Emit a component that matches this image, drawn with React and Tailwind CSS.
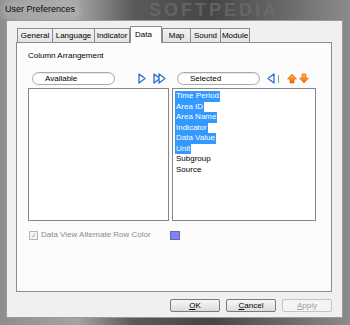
import React from "react";

const font = { fontFamily: "'Liberation Sans', Arial, sans-serif" };

const tabs = ["General", "Language", "Indicator", "Data", "Map", "Sound", "Module"];
const tabWidths = ["w-[36px]", "w-[43px]", "w-[36px]", "w-[32px]", "w-[29px]", "w-[31px]", "w-[30px]"];

const selected = ["Time Period", "Area ID", "Area Name", "Indicator", "Data Value", "Unit"];
const rest = ["Subgroup", "Source"];

function Pill({ label }) {
  return (
    <div className="flex h-[13px] w-[83px] items-center rounded-full border border-[#a9a9a9] bg-white pl-[12px] text-[8px] text-black shadow-[inset_0_1px_0_#e8e8e8]">
      {label}
    </div>
  );
}

function RightArrow({ ghost }) {
  return (
    <svg width="8" height="11" viewBox="0 0 8 11">
      <path d="M1 1 L7 5.5 L1 10 Z" fill={ghost ? "#eef3fb" : "#ffffff"} stroke="#2b6fd3" strokeWidth="1.3" strokeLinejoin="round" />
    </svg>
  );
}

function LeftArrow() {
  return (
    <svg width="8" height="11" viewBox="0 0 8 11">
      <path d="M7 1 L1 5.5 L7 10 Z" fill="#ffffff" stroke="#2b6fd3" strokeWidth="1.3" strokeLinejoin="round" />
    </svg>
  );
}

function OrangeArrow({ down }) {
  return (
    <svg width="10" height="11" viewBox="0 0 10 11">
      <defs>
        <linearGradient id={down ? "og2" : "og1"} x1="0" y1="0" x2="0" y2="1">
          <stop offset="0" stopColor="#ffb347" />
          <stop offset="1" stopColor="#f26b00" />
        </linearGradient>
      </defs>
      <path
        d={down ? "M3 1 H7 V5 H9.5 L5 10 L0.5 5 H3 Z" : "M5 1 L9.5 6 H7 V10 H3 V6 H0.5 Z"}
        fill={`url(#${down ? "og2" : "og1"})`}
        stroke="#e06000"
        strokeWidth="0.6"
      />
    </svg>
  );
}

function Button({ children, disabled }) {
  return (
    <div
      className={`flex h-[13px] w-[50px] items-center justify-center rounded-[2px] border text-[8px] ${
        disabled
          ? "border-[#c4c4c4] bg-[#f4f4f4] text-[#a0a0a0]"
          : "border-[#7a7a7a] bg-gradient-to-b from-[#f6f6f6] to-[#dcdcdc] text-black"
      }`}
    >
      {children}
    </div>
  );
}

export default function App() {
  return (
    <div
      style={font}
      className="flex h-[325px] w-[350px] flex-col overflow-hidden bg-[linear-gradient(90deg,#8e8e8e_0%,#a4a4a4_22%,#5a5a5a_38%,#454545_60%,#6a6a6a_82%,#8c8c8c_100%)]"
    >
      {/* title bar */}
      <div className="flex h-[20px] items-center overflow-hidden pl-[5px]">
        <span className="rounded-full bg-[#b8b8b8]/50 text-[9px] text-[#0a0a0a] shadow-[0_0_6px_4px_rgba(190,190,190,0.5)]">
          User Preferences
        </span>
        <span className="ml-[74px] text-[18px] font-bold leading-[20px] tracking-[3px] text-[#6e6e6e]/70">SOFTPEDIA</span>
      </div>

      {/* client area */}
      <div className="ml-[6px] mr-[7px] flex h-[298px] flex-col border border-[#9a9a9a] bg-[#f0f0f0]">
        {/* tabs */}
        <div className="ml-[10px] mt-[5px] flex h-[16px] items-end">
          {tabs.map((t, i) =>
            t === "Data" ? (
              <div
                key={t}
                className={`${tabWidths[i]} relative z-10 -mb-px flex h-[17px] items-start justify-start border border-b-0 border-[#898c95] bg-[#fcfcfc] pl-[4px] pt-[2px] text-[8px] text-black`}
              >
                {t}
              </div>
            ) : (
              <div
                key={t}
                className={`${tabWidths[i]} flex h-[14px] items-center justify-center border border-b-0 border-[#898c95] bg-gradient-to-b from-[#f2f2f2] to-[#e3e3e3] text-[8px] text-black ${
                  i > 0 && tabs[i - 1] !== "Data" ? "-ml-px" : ""
                }`}
              >
                {t}
              </div>
            )
          )}
        </div>

        {/* panel */}
        <div className="ml-[9px] flex h-[250px] w-[316px] flex-col border border-[#898c95] bg-[#fcfcfc] pl-[11px]">
          <div className="mt-[7px] text-[8px] text-black">Column Arrangement</div>

          <div className="mt-[10px] flex h-[13px] items-center">
            <div className="ml-[4px]">
              <Pill label="Available" />
            </div>
            <div className="ml-[23px] flex items-center">
              <RightArrow />
            </div>
            <div className="ml-[7px] flex items-center">
              <RightArrow ghost />
              <div className="-ml-[3px]">
                <RightArrow />
              </div>
            </div>
            <div className="ml-[11px]">
              <Pill label="Selected" />
            </div>
            <div className="ml-[7px] flex items-center">
              <LeftArrow />
            </div>
            <div className="ml-[3px] h-[8px] w-px bg-[#9a9a9a]" />
            <div className="ml-[8px] flex items-center">
              <OrangeArrow />
            </div>
            <div className="ml-[2px] flex items-center">
              <OrangeArrow down />
            </div>
          </div>

          <div className="mt-[3px] flex">
            <div className="h-[133px] w-[141px] border border-[#828790] bg-white" />
            <div className="ml-[3px] h-[133px] w-[144px] border border-[#828790] bg-white pl-[2px] pt-[2px]">
              {selected.map((s) => (
                <div key={s} className="flex h-[10.5px] items-center">
                  <span className="bg-[#3399ff] px-px text-[8px] leading-[10.5px] text-white">{s}</span>
                </div>
              ))}
              {rest.map((s) => (
                <div key={s} className="flex h-[10.5px] items-center">
                  <span className="px-px text-[8px] leading-[10.5px] text-black">{s}</span>
                </div>
              ))}
            </div>
          </div>

          <div className="mt-[8px] flex items-center">
            <div className="ml-[1px] flex h-[9px] w-[9px] items-center justify-center border border-[#b5b5b5] bg-[#f4f4f4] text-[7px] leading-none text-[#a8a8a8]">
              ✓
            </div>
            <span className="ml-[3px] text-[8px] text-[#8a8a8a]">Data View Alternate Row Color</span>
            <div className="ml-[19px] h-[9px] w-[10px] border border-[#6a6a9a] bg-[#8080ff]" />
          </div>
        </div>

        {/* buttons */}
        <div className="mt-[7px] flex justify-end gap-[6px] pr-[10px]">
          <Button>
            <span className="underline">O</span>K
          </Button>
          <Button>
            <span className="underline">C</span>ancel
          </Button>
          <Button disabled>
            <span className="underline">A</span>pply
          </Button>
        </div>
      </div>
    </div>
  );
}
